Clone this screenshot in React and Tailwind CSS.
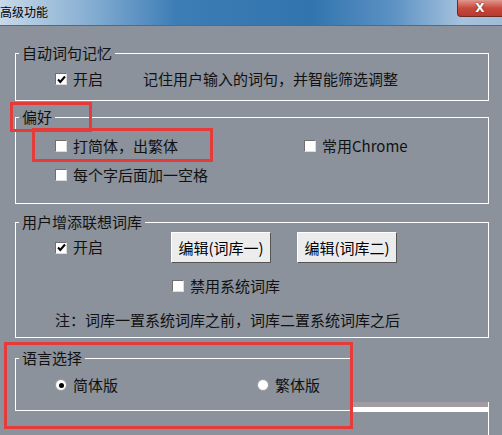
import { useState } from "react";

const font = { fontFamily: '"Noto Sans CJK SC", "Noto Sans", sans-serif' };

function Box({ checked }) {
    return (
        <span className="w-[12px] h-[12px] bg-white border border-t-[#6f6f6f] border-l-[#6f6f6f] border-r-[#dcdcdc] border-b-[#dcdcdc] flex items-center justify-center shrink-0">
            {checked && (
                <svg width="9" height="9" viewBox="0 0 9 9">
                    <path d="M1 4.5 L3.3 7 L8 1.5" fill="none" stroke="#000" strokeWidth="2" />
                </svg>
            )}
        </span>
    );
}

function Check({ checked, label, className = "" }) {
    return (
        <label className={"flex items-center gap-[6px] h-[20px] " + className}>
            <Box checked={checked} />
            <span>{label}</span>
        </label>
    );
}

function Radio({ checked, label, className = "" }) {
    return (
        <label className={"flex items-center gap-[6px] h-[20px] " + className}>
            <span className="w-[12px] h-[12px] rounded-full bg-white border border-[#9a9a9a] flex items-center justify-center shrink-0">
                {checked && <span className="w-[5px] h-[5px] rounded-full bg-black" />}
            </span>
            <span>{label}</span>
        </label>
    );
}

function Group({ title, className = "", children }) {
    return (
        <fieldset className={"border border-white p-0 m-0 " + className}>
            <legend className="ml-[3px] px-[3px] leading-[20px]">{title}</legend>
            {children}
        </fieldset>
    );
}

function Btn({ children }) {
    return (
        <button className="w-[100px] h-[31px] bg-[#ececec] border border-t-white border-l-white border-r-[#555] border-b-[#555] text-[15px] leading-[20px] text-black">
            {children}
        </button>
    );
}

export default function App() {
    const [lang] = useState("simp");

    return (
        <div className="relative w-[502px] h-[435px] overflow-hidden bg-[#8b929c] text-[15px] text-[#111]" style={font}>
            {/* title bar */}
            <div className="h-[26px] flex justify-between border-b border-[#4a6d8f] bg-[linear-gradient(90deg,#c8d9e9_0%,#86aed2_18%,#3d7db6_35%,#3274ae_62%,#5b91c3_78%,#a6c2dd_92%,#9fbcd8_100%)]">
                <span className="text-[12px] leading-[24px] text-black">高级功能</span>
                <div className="w-[45px] h-[17px] rounded-bl-[4px] border border-t-0 border-r-0 border-[#6e2a22] bg-[linear-gradient(180deg,#e0998f_0%,#c94a3d_50%,#b8392d_100%)] flex items-center justify-center">
                    <span className="text-white text-[12px] font-bold leading-none [text-shadow:0_0_2px_#5a1a14]" style={{ fontFamily: '"DejaVu Sans", sans-serif' }}>X</span>
                </div>
            </div>

            <div className="flex flex-col pl-[15px] pr-[13px] pt-[17px]">
                <Group title="自动词句记忆">
                    <div className="flex items-center pl-[39px] pt-[6px] pb-[11px]">
                        <Check checked label="开启" className="w-[88px]" />
                        <span className="leading-[20px]">记住用户输入的词句，并智能筛选调整</span>
                    </div>
                </Group>

                <Group title="偏好" className="mt-[6px]">
                    <div className="flex flex-col gap-[9px] pl-[39px] pt-[9px] pb-[18px]">
                        <div className="flex">
                            <Check label="打简体，出繁体" className="w-[249px]" />
                            <Check label="常用Chrome" />
                        </div>
                        <Check label="每个字后面加一空格" />
                    </div>
                </Group>

                <Group title="用户增添联想词库" className="mt-[8px]">
                    <div className="flex flex-col pl-[39px] pb-[7px]">
                        <div className="flex items-center h-[31px]">
                            <Check checked label="开启" className="w-[116px]" />
                            <Btn>编辑(词库一)</Btn>
                            <span className="w-[26px]" />
                            <Btn>编辑(词库二)</Btn>
                        </div>
                        <Check label="禁用系统词库" className="ml-[117px] mt-[13px]" />
                        <div className="leading-[20px] mt-[14px]">注：词库一置系统词库之前，词库二置系统词库之后</div>
                    </div>
                </Group>

                <div className="flex items-start mt-[10px]">
                    <Group title="语言选择" className="w-[338px] border-r-0">
                        <div className="flex pl-[39px] pt-[7px] pb-[15px]">
                            <Radio checked={lang === "simp"} label="简体版" className="w-[202px]" />
                            <Radio checked={lang === "trad"} label="繁体版" />
                        </div>
                    </Group>
                    <div className="flex-1 mt-[54px] h-[40px] border-r border-white">
                        <div className="h-[5px] bg-[#a09ca2]" />
                        <div className="h-[5px] bg-white" />
                    </div>
                </div>
            </div>

            {/* red annotation marks */}
            <div className="absolute left-[10px] top-[102px] w-[82px] h-[30px] border-[3px] border-[#e63b3b]" />
            <div className="absolute left-[32px] top-[128px] w-[181px] h-[34px] border-[3px] border-[#e63b3b]" />
            <div className="absolute left-[4px] top-[342px] w-[349px] h-[87px] border-[3px] border-[#e63b3b]" />
        </div>
    );
}
